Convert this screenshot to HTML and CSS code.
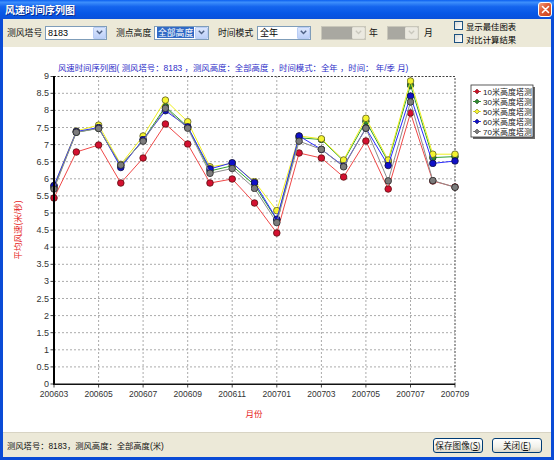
FILE: index.html
```html
<!DOCTYPE html>
<html>
<head>
<meta charset="utf-8">
<link rel="stylesheet" href="styles.css">
</head>
<body>
<div class="window">
  <div class="titlebar">
    <span class="title">风速时间序列图</span>
    <span class="close"><svg width="9" height="9" viewBox="0 0 9 9"><path d="M1.5 1.5L7.5 7.5M7.5 1.5L1.5 7.5" stroke="#fff" stroke-width="1.6" stroke-linecap="round"/></svg></span>
  </div>
  <div class="client">
    <div class="toolbar">
      <span class="lbl l1">测风塔号</span>
      <div class="combo c1"><span class="val">8183</span><span class="btn"><svg width="7" height="5" viewBox="0 0 7 5"><path d="M0.8 0.8L3.5 3.5L6.2 0.8" fill="none" stroke="#4d6185" stroke-width="1.5"/></svg></span></div>
      <span class="lbl l2">测点高度</span>
      <div class="combo c2"><span class="val"><span class="sel">全部高度</span></span><span class="btn"><svg width="7" height="5" viewBox="0 0 7 5"><path d="M0.8 0.8L3.5 3.5L6.2 0.8" fill="none" stroke="#4d6185" stroke-width="1.5"/></svg></span></div>
      <span class="lbl l3">时间模式</span>
      <div class="combo c3"><span class="val">全年</span><span class="btn"><svg width="7" height="5" viewBox="0 0 7 5"><path d="M0.8 0.8L3.5 3.5L6.2 0.8" fill="none" stroke="#4d6185" stroke-width="1.5"/></svg></span></div>
      <div class="combo c4 disabled"><span class="val"></span><span class="btn"><svg width="7" height="5" viewBox="0 0 7 5"><path d="M0.8 0.8L3.5 3.5L6.2 0.8" fill="none" stroke="#c9c7bd" stroke-width="1.3"/></svg></span></div>
      <span class="lbl l4">年</span>
      <div class="combo c5 disabled"><span class="val"></span><span class="btn"><svg width="7" height="5" viewBox="0 0 7 5"><path d="M0.8 0.8L3.5 3.5L6.2 0.8" fill="none" stroke="#c9c7bd" stroke-width="1.3"/></svg></span></div>
      <span class="lbl l5">月</span>
      <div class="checks">
        <div class="chk"><span class="box"></span><span>显示最佳图表</span></div>
        <div class="chk"><span class="box"></span><span>对比计算结果</span></div>
      </div>
    </div>
    <div class="chart">
      <svg class="plot" width="548" height="385" viewBox="3 47 548 385">
        <defs>
          <marker id="mRed" viewBox="0 0 8 8" refX="4" refY="4" markerWidth="8" markerHeight="8" markerUnits="userSpaceOnUse"><circle cx="4" cy="4" r="3.3" fill="#d41030" stroke="#5a1010" stroke-width="0.8"/></marker>
          <marker id="mGreen" viewBox="0 0 8 8" refX="4" refY="4" markerWidth="8" markerHeight="8" markerUnits="userSpaceOnUse"><circle cx="4" cy="4" r="3.3" fill="#2f8a2f" stroke="#1a3a1a" stroke-width="0.8"/></marker>
          <marker id="mYellow" viewBox="0 0 8 8" refX="4" refY="4" markerWidth="8" markerHeight="8" markerUnits="userSpaceOnUse"><circle cx="4" cy="4" r="3.3" fill="#f4f430" stroke="#5a5a20" stroke-width="0.8"/></marker>
          <marker id="mBlue" viewBox="0 0 8 8" refX="4" refY="4" markerWidth="8" markerHeight="8" markerUnits="userSpaceOnUse"><circle cx="4" cy="4" r="3.3" fill="#1010c8" stroke="#101040" stroke-width="0.8"/></marker>
          <marker id="mGray" viewBox="0 0 8 8" refX="4" refY="4" markerWidth="8" markerHeight="8" markerUnits="userSpaceOnUse"><circle cx="4" cy="4" r="3.3" fill="#7c7c7c" stroke="#2a2a2a" stroke-width="0.8"/></marker>
        </defs>
        <text class="ctitle" x="58" y="71">风速时间序列图( 测风塔号：8183 ，测风高度：全部高度 ，时间模式：全年 ，时间： 年/季  月)</text>
        <path class="grid" d="M54 366.9H455M54 349.8H455M54 332.7H455M54 315.6H455M54 298.5H455M54 281.4H455M54 264.3H455M54 247.2H455M54 230.1H455M54 213H455M54 195.9H455M54 178.8H455M54 161.7H455M54 144.6H455M54 127.5H455M54 110.4H455M54 93.3H455"/>
        <path class="grid" d="M98.6 76V384M143.1 76V384M187.7 76V384M232.2 76V384M276.8 76V384M321.4 76V384M365.9 76V384M410.5 76V384"/>
        <path class="frame" d="M54 76.5H455V384"/>
        <path class="ticks" d="M50.5 384H54M50.5 366.9H54M50.5 349.8H54M50.5 332.7H54M50.5 315.6H54M50.5 298.5H54M50.5 281.4H54M50.5 264.3H54M50.5 247.2H54M50.5 230.1H54M50.5 213H54M50.5 195.9H54M50.5 178.8H54M50.5 161.7H54M50.5 144.6H54M50.5 127.5H54M50.5 110.4H54M50.5 93.3H54M50.5 76.5H54"/>
        <path class="ticks" d="M54 384V387.5M98.6 384V387.5M143.1 384V387.5M187.7 384V387.5M232.2 384V387.5M276.8 384V387.5M321.4 384V387.5M365.9 384V387.5M410.5 384V387.5M455 384V387.5"/>
        <g class="ylab">
          <text x="49" y="387">0</text><text x="49" y="369.9">0.5</text><text x="49" y="352.8">1</text><text x="49" y="335.7">1.5</text><text x="49" y="318.6">2</text><text x="49" y="301.5">2.5</text><text x="49" y="284.4">3</text><text x="49" y="267.3">3.5</text><text x="49" y="250.2">4</text><text x="49" y="233.1">4.5</text><text x="49" y="216">5</text><text x="49" y="198.9">5.5</text><text x="49" y="181.8">6</text><text x="49" y="164.7">6.5</text><text x="49" y="147.6">7</text><text x="49" y="130.5">7.5</text><text x="49" y="113.4">8</text><text x="49" y="96.3">8.5</text><text x="49" y="79.2">9</text>
        </g>
        <g class="xlab">
          <text x="54" y="397">200603</text><text x="98.6" y="397">200605</text><text x="143.1" y="397">200607</text><text x="187.7" y="397">200609</text><text x="232.2" y="397">200611</text><text x="276.8" y="397">200701</text><text x="321.4" y="397">200703</text><text x="365.9" y="397">200705</text><text x="410.5" y="397">200707</text><text x="455" y="397">200709</text>
        </g>
        <text class="atitle" x="254" y="417" text-anchor="middle">月份</text>
        <text class="atitle" transform="translate(20.5 230) rotate(-90)" text-anchor="middle">平均风速(米/秒)</text>

        <polyline class="s s-red" points="54,198 76.3,152 98.6,145 120.8,183 143.1,158 165.4,124 187.7,144 210,183 232.2,179 254.5,203 276.8,233 299.1,153 321.4,158 343.6,177 365.9,141 388.2,189 410.5,113 432.8,181 455,187"/>
        <polyline class="s s-green" points="54,187.3 76.3,132.3 98.6,128.2 120.8,165.8 143.1,140.2 165.4,106.6 187.7,126.8 210,170.9 232.2,165.8 254.5,185 276.8,219.8 299.1,137.8 321.4,139.5 343.6,161 365.9,121.3 388.2,161.7 410.5,85.1 432.8,157.6 455,156.6"/>
        <polyline class="s s-yellow" points="54,185.6 76.3,131 98.6,125.1 120.8,164.4 143.1,136 165.4,100.1 187.7,121.7 210,166.8 232.2,163.4 254.5,181.5 276.8,210.6 299.1,136 321.4,138.8 343.6,160 365.9,118.3 388.2,160 410.5,81 432.8,154.2 455,154.2"/>
        <polyline class="s s-blue" points="54,185.6 76.3,131.6 98.6,127.5 120.8,167.5 143.1,139.5 165.4,110.7 187.7,126.8 210,168.9 232.2,162.7 254.5,182.6 276.8,219.2 299.1,136 321.4,149.4 343.6,166.1 365.9,128.2 388.2,165.5 410.5,96.1 432.8,163.4 455,161"/>
        <polyline class="s s-gray" points="54,189 76.3,132.3 98.6,128.5 120.8,165.1 143.1,141.2 165.4,108.3 187.7,128.2 210,173.3 232.2,168.5 254.5,188.4 276.8,222.6 299.1,141.2 321.4,149.4 343.6,166.8 365.9,128.2 388.2,180.9 410.5,101.9 432.8,180.5 455,187.3"/>
        <path class="axis" d="M54 76V385"/>
        <path class="axisb" d="M53 384.2H455"/>

        <g class="legend">
          <rect x="473" y="87" width="62" height="52" fill="#6a6a6a"/>
          <rect x="471" y="85" width="62" height="52" fill="#fff" stroke="#333" stroke-width="0.8"/>
          <path d="M473 91.5H481" stroke="#e84040"/><path d="M477 89L479.5 91.5L477 94L474.5 91.5Z" fill="#c81028" stroke="#5a1010" stroke-width="0.5"/>
          <text x="483" y="94.5">10米高度塔测</text>
          <path d="M473 101.5H481" stroke="#2f9a2f"/><path d="M477 99L479.5 101.5L477 104L474.5 101.5Z" fill="#2f8a2f" stroke="#1a3a1a" stroke-width="0.5"/>
          <text x="483" y="104.5">30米高度塔测</text>
          <path d="M473 111.5H481" stroke="#e8e820"/><path d="M477 109L479.5 111.5L477 114L474.5 111.5Z" fill="#f4f430" stroke="#5a5a20" stroke-width="0.5"/>
          <text x="483" y="114.5">50米高度塔测</text>
          <path d="M473 121.5H481" stroke="#2a2aff"/><path d="M477 119L479.5 121.5L477 124L474.5 121.5Z" fill="#1010c8" stroke="#101040" stroke-width="0.5"/>
          <text x="483" y="124.5">60米高度塔测</text>
          <path d="M473 131.5H481" stroke="#909090"/><path d="M477 129L479.5 131.5L477 134L474.5 131.5Z" fill="#7c7c7c" stroke="#2a2a2a" stroke-width="0.5"/>
          <text x="483" y="134.5">70米高度塔测</text>
        </g>
      </svg>
    </div>
    <div class="status">
      <span class="stext">测风塔号：8183，测风高度：全部高度(米)</span>
      <div class="btns">
        <button class="xpbtn">保存图像(<u>S</u>)</button>
        <button class="xpbtn">关闭(<u>E</u>)</button>
      </div>
    </div>
  </div>
</div>
</body>
</html>
```
FILE: styles.css
```css
html, body {
  margin: 0;
  padding: 0;
  background: #fff;
}
body {
  font-family: "Liberation Sans", "Noto Sans CJK SC", sans-serif;
  font-size: 9px;
  color: #000;
}
.window {
  width: 554px;
  height: 460px;
  display: flex;
  flex-direction: column;
  background: #0a4bd6;
  box-sizing: border-box;
}
.titlebar {
  height: 19px;
  flex: none;
  display: flex;
  align-items: center;
  justify-content: space-between;
  background: linear-gradient(#0b5ff0 0%, #3d8ffc 12%, #1565ee 35%, #0757e6 70%, #0a50da 100%);
}
.title {
  margin-left: 5px;
  color: #fff;
  font-family: "Noto Sans CJK SC", sans-serif;
  font-weight: bold;
  font-size: 10px;
  text-shadow: 1px 1px 0 #0a2a8a;
}
.close {
  width: 12px;
  height: 13px;
  margin-right: 2px;
  border: 1px solid #fff;
  border-radius: 3px;
  background: linear-gradient(135deg, #f0a080 0%, #e0603a 40%, #c8401c 100%);
  display: flex;
  align-items: center;
  justify-content: center;
}
.client {
  flex: 1;
  margin: 0 3px 3px 3px;
  background: #ece9d8;
  display: flex;
  flex-direction: column;
}
.toolbar {
  height: 28px;
  flex: none;
  display: flex;
  align-items: center;
  padding-bottom: 1px;
  box-sizing: border-box;
  font-family: "Noto Sans CJK SC", sans-serif;
  font-size: 8.8px;
}
.lbl {
  flex: none;
  white-space: nowrap;
  color: #111;
}
.l1 { margin-left: 4px; width: 38px; }
.l2 { margin-left: 9px; width: 38px; }
.l3 { margin-left: 9px; width: 39px; }
.l4 { margin-left: 3px; width: 18px; }
.l5 { margin-left: 5px; width: 30px; }
.combo {
  flex: none;
  height: 14px;
  box-sizing: border-box;
  border: 1px solid #7f9db9;
  background: #fff;
  display: flex;
  align-items: stretch;
}
.combo .val {
  flex: 1;
  display: flex;
  align-items: center;
  padding-left: 2px;
  font-family: "Liberation Sans", "Noto Sans CJK SC", sans-serif;
  font-size: 9px;
  white-space: nowrap;
  overflow: hidden;
}
.combo .btn {
  width: 11px;
  border: 1px solid #b9cdf5;
  border-radius: 1px;
  background: linear-gradient(#dbe6fd, #bdd0f8);
  display: flex;
  align-items: center;
  justify-content: center;
}
.c1 { width: 62px; }
.c2 { width: 55px; }
.c3 { width: 54px; }
.c4 { width: 45px; margin-left: 10px; }
.c5 { width: 32px; }
.sel {
  background: #316ac5;
  color: #fff;
  padding: 0 1px;
  line-height: 11px;
  font-family: "Noto Sans CJK SC", sans-serif;
  font-size: 8.8px;
}
.combo.disabled {
  border-color: #c9c7ba;
  background: #a9a8a1;
}
.combo.disabled .val {
  background: #a9a8a1;
}
.combo.disabled .btn {
  border-color: #e4e2d8;
  background: #ebe9e0;
}
.checks {
  flex: none;
  display: flex;
  flex-direction: column;
  gap: 1px;
  margin-top: -1px;
}
.chk {
  height: 12px;
  display: flex;
  align-items: center;
  gap: 3px;
  font-size: 8.4px;
  white-space: nowrap;
}
.box {
  width: 9px;
  height: 9px;
  box-sizing: border-box;
  border: 1px solid #1c5180;
  background: linear-gradient(135deg, #dcdcd7, #fff);
}
.chart {
  height: 385px;
  flex: none;
  background: #fff;
}
.plot {
  display: block;
}
.ctitle {
  fill: #2d2dc8;
  font-family: "Liberation Sans", "Noto Sans CJK SC", sans-serif;
  font-size: 8.4px;
}
.grid {
  fill: none;
  stroke: #ababab;
  stroke-width: 1;
  stroke-dasharray: 2 2;
}
.frame {
  fill: none;
  stroke: #404040;
  stroke-width: 1;
  stroke-dasharray: 2 1.5;
}
.ticks {
  fill: none;
  stroke: #444;
  stroke-width: 1;
}
.axis {
  stroke: #000;
  stroke-width: 2;
}
.axisb {
  stroke: #111;
  stroke-width: 1.5;
}
.ylab text {
  fill: #333;
  font-family: "Liberation Sans", sans-serif;
  font-size: 9px;
  text-anchor: end;
}
.xlab text {
  fill: #333;
  font-family: "Liberation Sans", sans-serif;
  font-size: 8.5px;
  text-anchor: middle;
}
.atitle {
  fill: #e52020;
  font-family: "Liberation Sans", "Noto Sans CJK SC", sans-serif;
  font-size: 8.5px;
}
.s {
  fill: none;
  stroke-width: 1;
  stroke-linejoin: round;
}
.s-red { stroke: #f04848; marker-start: url(#mRed); marker-mid: url(#mRed); marker-end: url(#mRed); }
.s-green { stroke: #2ea02e; marker-start: url(#mGreen); marker-mid: url(#mGreen); marker-end: url(#mGreen); }
.s-yellow { stroke: #f0f020; marker-start: url(#mYellow); marker-mid: url(#mYellow); marker-end: url(#mYellow); }
.s-blue { stroke: #2a2aff; marker-start: url(#mBlue); marker-mid: url(#mBlue); marker-end: url(#mBlue); }
.s-gray { stroke: #8c8c8c; marker-start: url(#mGray); marker-mid: url(#mGray); marker-end: url(#mGray); }
.legend text {
  fill: #222;
  font-family: "Liberation Sans", "Noto Sans CJK SC", sans-serif;
  font-size: 8px;
}
.status {
  flex: 1;
  display: flex;
  align-items: center;
  justify-content: space-between;
  border-top: 1px solid #d8d4c4;
  font-family: "Liberation Sans", "Noto Sans CJK SC", sans-serif;
  font-size: 8.3px;
}
.stext {
  margin-left: 4px;
  color: #111;
}
.btns {
  display: flex;
  gap: 9px;
  margin-right: 9px;
}
.xpbtn {
  width: 50px;
  height: 15px;
  padding: 0;
  box-sizing: border-box;
  border: 1px solid #003c74;
  border-radius: 3px;
  background: linear-gradient(#ffffff, #f2f1ea 60%, #dcd8cb);
  font-family: "Noto Sans CJK SC", sans-serif;
  font-size: 8.6px;
  line-height: 12px;
  color: #111;
}
```
